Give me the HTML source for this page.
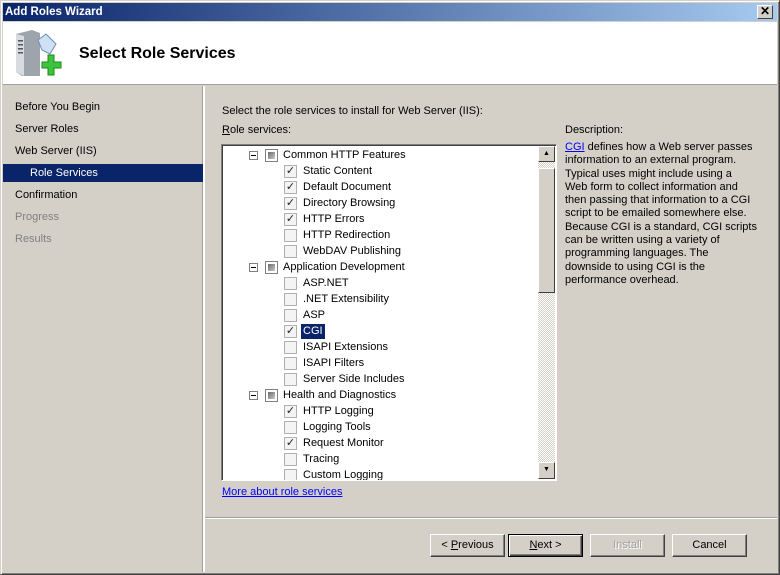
<!DOCTYPE html>
<html><head><style>
*{margin:0;padding:0;box-sizing:border-box}
body{width:780px;height:575px;background:#d4d0c8;font-family:"Liberation Sans",Tahoma,sans-serif;font-size:11px;color:#000;position:relative;overflow:hidden}
.a{position:absolute}
.win{left:0;top:0;width:780px;height:575px;border:1px solid #d4d0c8;border-right-color:#404040;border-bottom-color:#404040;box-shadow:inset 1px 1px 0 #fff,inset -1px -1px 0 #808080}
.title{left:3px;top:3px;width:774px;height:18px;background:linear-gradient(to right,#0a246a,#a6caf0);color:#fff;font-weight:bold;font-size:11.5px;padding:1px 2px;line-height:16px}
.close{left:757px;top:5px;width:16px;height:14px;background:#d4d0c8;border:1px solid;border-color:#fff #404040 #404040 #fff;font-size:12px;line-height:11px;text-align:center;font-weight:bold}
.hdr{left:3px;top:22px;width:774px;height:63px;background:#fff;border-bottom:1px solid #a0a0a0}
.h1{left:79px;top:45px;font-size:16px;font-weight:bold}
.nav div{position:absolute;left:15px;font-size:11px}
.sel{left:3px;top:164px;width:200px;height:18px;background:#0a246a}
.cb{position:absolute;width:13px;height:13px;border:1px solid #b0b0b0;background:#f4f4f4;font-size:11px;line-height:11px;text-align:center;color:#222}
.pm{position:absolute;width:9px;height:9px;border:1px solid #808080;background:#fff}
.pm:after{content:"";position:absolute;left:1px;top:3px;width:5px;height:1px;background:#000}
.pb{position:absolute;width:13px;height:13px;border:1px solid #808080;background:#fff}
.pb:after{content:"";position:absolute;left:2px;top:2px;width:7px;height:7px;background:linear-gradient(135deg,#6a6a6a,#c8c8c8)}
.t{position:absolute;white-space:nowrap;line-height:15px}
.btn{position:absolute;top:534px;width:75px;height:23px;border:1px solid;border-color:#fff #404040 #404040 #fff;box-shadow:inset -1px -1px 0 #808080;text-align:center;line-height:21px;font-size:11px}
</style></head><body>
<div class="a win"></div>
<div class="a title">Add Roles Wizard</div>
<div class="a close">✕</div>
<div class="a hdr"></div>
<svg class="a" style="left:12px;top:28px" width="50" height="50" viewBox="0 0 50 50">
<path d="M4 6 L20 2 L28 5 L28 48 L10 48 L4 44 Z" fill="#9ea4ab"/>
<path d="M4 6 L12 8 L12 48 L4 44Z" fill="#d8dce0"/>
<rect x="6" y="12" width="5" height="1.5" fill="#555"/><rect x="6" y="16" width="5" height="1.5" fill="#555"/><rect x="6" y="20" width="5" height="1.5" fill="#555"/><rect x="6" y="24" width="5" height="1.5" fill="#555"/>
<path d="M26 12 L34 6 L44 16 L38 26 L30 22Z" fill="#cfe0f4" stroke="#6a8cb8"/>
<path d="M30 34 h6 v-7 h6 v7 h7 v6 h-7 v7 h-6 v-7 h-6z" fill="#3cc43c" stroke="#1b8a1b"/>
</svg>
<div class="a h1">Select Role Services</div>
<div class="a" style="left:202px;top:86px;width:1px;height:486px;background:#a0a0a0"></div>
<div class="a" style="left:203px;top:86px;width:2px;height:486px;background:#fff"></div>
<div class="a sel"></div>
<div class="nav">
<div style="top:101px">Before You Begin</div>
<div style="top:123px">Server Roles</div>
<div style="top:145px">Web Server (IIS)</div>
<div style="top:167px;left:30px;color:#fff">Role Services</div>
<div style="top:189px">Confirmation</div>
<div style="top:211px;color:#808080">Progress</div>
<div style="top:233px;color:#808080">Results</div>
</div>
<div class="a" style="left:222px;top:105px">Select the role services to install for Web Server (IIS):</div>
<div class="a" style="left:222px;top:124px"><u>R</u>ole services:</div>
<div class="a" style="left:221px;top:144px;width:336px;height:337px;background:#fff;border:1px solid;border-color:#808080 #fff #fff #808080;box-shadow:inset 1px 1px 0 #404040;overflow:hidden">
<div id="rows"></div>
</div>
<div class="a" style="left:538px;top:146px;width:17px;height:333px;background:repeating-conic-gradient(#d4d0c8 0 25%,#fff 0 50%) 0 0/2px 2px"></div>
<div class="a" style="left:538px;top:146px;width:17px;height:16px;background:#d4d0c8;border:1px solid;border-color:#fff #404040 #404040 #fff;font-size:7px;text-align:center;line-height:13px">▲</div>
<div class="a" style="left:538px;top:168px;width:17px;height:125px;background:#d4d0c8;border:1px solid;border-color:#fff #404040 #404040 #fff"></div>
<div class="a" style="left:538px;top:462px;width:17px;height:17px;background:#d4d0c8;border:1px solid;border-color:#fff #404040 #404040 #fff;font-size:7px;text-align:center;line-height:14px">▼</div>
<div class="a" style="left:222px;top:486px;color:#0000ff;text-decoration:underline">More about role services</div>
<div class="a" style="left:565px;top:124px">Description:</div>
<div class="a" style="left:565px;top:141px;white-space:nowrap;line-height:13.3px"><span style="color:#0000ff;text-decoration:underline">CGI</span> defines how a Web server passes<br>information to an external program.<br>Typical uses might include using a<br>Web form to collect information and<br>then passing that information to a CGI<br>script to be emailed somewhere else.<br>Because CGI is a standard, CGI scripts<br>can be written using a variety of<br>programming languages. The<br>downside to using CGI is the<br>performance overhead.</div>
<div class="a" style="left:205px;top:517px;width:572px;height:1px;background:#a0a0a0"></div>
<div class="a" style="left:205px;top:518px;width:572px;height:1px;background:#fff"></div>
<div class="btn" style="left:430px">&lt; <u>P</u>revious</div>
<div class="btn" style="left:508px;border:1px solid #000;box-shadow:inset 1px 1px 0 #fff,inset -1px -1px 0 #404040,inset -2px -2px 0 #808080"><u>N</u>ext &gt;</div>
<div class="btn" style="left:590px;color:#a0a0a0;text-shadow:1px 1px 0 #fff">Install</div>
<div class="btn" style="left:672px">Cancel</div>
<script>
var d=[[0,"Common HTTP Features"],[1,"Static Content",1],[1,"Default Document",1],[1,"Directory Browsing",1],[1,"HTTP Errors",1],[1,"HTTP Redirection"],[1,"WebDAV Publishing"],[0,"Application Development"],[1,"ASP.NET"],[1,".NET Extensibility"],[1,"ASP"],[1,"CGI",1,1],[1,"ISAPI Extensions"],[1,"ISAPI Filters"],[1,"Server Side Includes"],[0,"Health and Diagnostics"],[1,"HTTP Logging",1],[1,"Logging Tools"],[1,"Request Monitor",1],[1,"Tracing"],[1,"Custom Logging"]];
var h="";
d.forEach(function(r,i){var y=3+16*i;
if(r[0]==0){h+='<div class="pm" style="left:27px;top:'+(y+3)+'px"></div><div class="pb" style="left:43px;top:'+(y+1)+'px"></div><div class="t" style="left:61px;top:'+y+'px">'+r[1]+'</div>';}
else{h+='<div class="cb" style="left:62px;top:'+(y+1)+'px">'+(r[2]?'✓':'')+'</div><div class="t" style="left:79px;top:'+y+'px;padding:0 2px;'+(r[3]?'background:#0a246a;color:#fff':'')+'">'+r[1]+'</div>';}
});
document.getElementById("rows").innerHTML=h;
</script>
</body></html>
